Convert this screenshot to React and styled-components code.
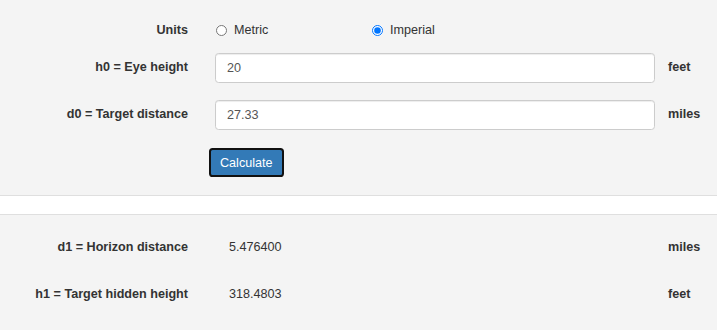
import React, { useState } from "react";
import styled, { createGlobalStyle } from "styled-components";

const GlobalStyle = createGlobalStyle`
  html, body {
    margin: 0;
    padding: 0;
    background: #f4f4f4;
  }
  body {
    font-family: "Liberation Sans", Arial, sans-serif;
    font-size: 12.6px;
    line-height: 1.42857;
    color: #333;
  }
  * {
    box-sizing: border-box;
  }
`;

const Page = styled.div`
  width: 717px;
  min-height: 330px;
  background: #f4f4f4;
`;

const FormSection = styled.form`
  padding: 16px 0 18px;
  border-bottom: 1px solid #dfdfdf;
`;

const Stripe = styled.div`
  height: 19px;
  background: #fff;
  border-bottom: 1px solid #dfdfdf;
`;

const ResultSection = styled.div`
  padding-top: 18px;
`;

const Row = styled.div`
  display: grid;
  grid-template-columns: 215px 453px 1fr;
  align-items: center;
  height: 30px;
  margin-bottom: ${(props) => props.gap ?? 17}px;
`;

const Label = styled.label`
  font-weight: 700;
  text-align: right;
  padding-right: 27px;
  white-space: nowrap;
`;

const Unit = styled.span`
  font-weight: 700;
`;

const Radios = styled.div`
  display: flex;
  align-items: center;
`;

const RadioLabel = styled.label`
  display: flex;
  align-items: center;
  width: 156px;
  cursor: pointer;
`;

const Radio = styled.input`
  width: 11px;
  height: 11px;
  margin: 0 7px 0 1px;
`;

const Input = styled.input`
  width: 440px;
  height: 30px;
  padding: 0 11px;
  font-family: inherit;
  font-size: 12.6px;
  color: #555;
  background: #fff;
  border: 1px solid #ccc;
  border-radius: 3.6px;
  box-shadow: inset 0 1px 1px rgba(0, 0, 0, 0.075);
  outline: none;
`;

const ButtonRow = styled.div`
  display: flex;
  padding-left: 209px;
  margin-top: 18px;
`;

const Button = styled.button`
  height: 29px;
  padding: 0 9px;
  font-family: inherit;
  font-size: 12.6px;
  color: #fff;
  background: #337ab7;
  border: 2px solid #111;
  border-radius: 3.6px;
  cursor: pointer;
`;

const Value = styled.span`
  padding-left: 14px;
`;

const results = [
  { label: "d1 = Horizon distance", value: "5.476400", unit: "miles" },
  { label: "h1 = Target hidden height", value: "318.4803", unit: "feet" },
];

export default function App() {
  const [units, setUnits] = useState("imperial");
  const [eye, setEye] = useState("20");
  const [dist, setDist] = useState("27.33");

  return (
    <Page>
      <GlobalStyle />
      <FormSection onSubmit={(e) => e.preventDefault()}>
        <Row gap={7}>
          <Label>Units</Label>
          <Radios>
            <RadioLabel>
              <Radio
                type="radio"
                name="units"
                checked={units === "metric"}
                onChange={() => setUnits("metric")}
              />
              Metric
            </RadioLabel>
            <RadioLabel>
              <Radio
                type="radio"
                name="units"
                checked={units === "imperial"}
                onChange={() => setUnits("imperial")}
              />
              Imperial
            </RadioLabel>
          </Radios>
        </Row>
        <Row>
          <Label>h0 = Eye height</Label>
          <Input value={eye} onChange={(e) => setEye(e.target.value)} />
          <Unit>feet</Unit>
        </Row>
        <Row gap={0}>
          <Label>d0 = Target distance</Label>
          <Input value={dist} onChange={(e) => setDist(e.target.value)} />
          <Unit>miles</Unit>
        </Row>
        <ButtonRow>
          <Button type="submit">Calculate</Button>
        </ButtonRow>
      </FormSection>
      <Stripe />
      <ResultSection>
        {results.map((r) => (
          <Row key={r.label}>
            <Label>{r.label}</Label>
            <Value>{r.value}</Value>
            <Unit>{r.unit}</Unit>
          </Row>
        ))}
      </ResultSection>
    </Page>
  );
}
